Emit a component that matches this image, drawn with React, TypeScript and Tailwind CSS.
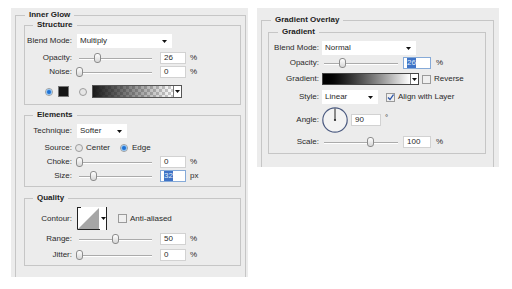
import type { ReactNode } from 'react'

function Group({
  title,
  legendClass,
  className,
  children,
}: {
  title: string
  legendClass: string
  className?: string
  children: ReactNode
}) {
  return (
    <fieldset className={`min-w-0 border border-[#c6c6c6] ${className ?? ''}`}>
      <legend className={`px-[4px] text-[8px] font-bold leading-[10px] text-[#1c1c1c] ${legendClass}`}>
        {title}
      </legend>
      {children}
    </fieldset>
  )
}

function Row({
  label,
  labelClass,
  className,
  children,
}: {
  label: string
  labelClass: string
  className: string
  children: ReactNode
}) {
  return (
    <div className={`flex items-center ${className}`}>
      <span className={`shrink-0 text-right ${labelClass}`}>{label}</span>
      {children}
    </div>
  )
}

function Arrow() {
  return (
    <svg width="5" height="3" viewBox="0 0 5 3">
      <path d="M0 0 H5 L2.5 3 Z" fill="#111" />
    </svg>
  )
}

function Select({ value, className }: { value: string; className: string }) {
  return (
    <div className={`flex h-[14px] items-center justify-between bg-white pl-[3px] pr-[5px] ${className}`}>
      <span>{value}</span>
      <Arrow />
    </div>
  )
}

function Slider({ className, pos }: { className: string; pos: number }) {
  return (
    <div className={`relative h-[12px] shrink-0 ${className}`}>
      <div className="absolute left-[2px] right-0 top-[6px] h-px bg-[#ababab]" />
      <div className="absolute left-[2px] right-0 top-[7px] h-px bg-white" />
      <div
        className="absolute top-[1px] h-[10px] w-[7px] rounded-[3px] border border-[#8c8c8c] bg-linear-to-b from-white to-[#d6d6d6]"
        style={{ left: pos - 3 }}
      />
    </div>
  )
}

function NumBox({
  value,
  className,
  focus,
}: {
  value: string
  className: string
  focus?: boolean
}) {
  return (
    <div
      className={`flex h-[12px] shrink-0 items-center border bg-white pl-[3px] ${
        focus ? 'border-[#86aad8]' : 'border-[#d2d2d2]'
      } ${className}`}
    >
      <span className={focus ? 'bg-[#3f73c6] text-[#dfe9f7]' : ''}>{value}</span>
    </div>
  )
}

function Radio({ on }: { on?: boolean }) {
  return (
    <div className="flex h-[8px] w-[8px] shrink-0 items-center justify-center rounded-full border border-[#9d9d9d] bg-[#e6e6e6]">
      {on && <div className="h-[4px] w-[4px] rounded-full bg-[#1f72d4] ring-1 ring-[#8fc0ee]" />}
    </div>
  )
}

function Check({ on, className }: { on?: boolean; className: string }) {
  return (
    <div className={`h-[9px] w-[9px] shrink-0 border border-[#9a9a9a] bg-[#efefef] ${className}`}>
      {on && (
        <svg width="7" height="7" viewBox="0 0 7 7">
          <path d="M1 3.5 L3 5.5 L6.5 0.5" stroke="#2c55a8" strokeWidth="1.3" fill="none" />
        </svg>
      )}
    </div>
  )
}

export default function App() {
  return (
    <div className="flex h-[289px] w-[512px] items-start bg-white font-['Liberation_Sans',Arial,sans-serif] text-[8px] leading-[10px] text-[#2a2a2a]">
      {/* Inner Glow */}
      <div className="ml-[11px] mt-[8px] h-[269px] w-[237px] shrink-0 overflow-hidden bg-[#ececec] pl-[4px] pr-[2px] pt-[2px]">
        <Group title="Inner Glow" legendClass="ml-[9px]">
          <div className="pb-[30px] pl-[8px] pr-[4px]">
            <Group title="Structure" legendClass="ml-[8px]">
              <div className="pb-[6px]">
                <Row label="Blend Mode:" labelClass="w-[47px]" className="mt-[4px] h-[14px]">
                  <Select value="Multiply" className="ml-[5px] w-[95px]" />
                </Row>
                <Row label="Opacity:" labelClass="w-[47px]" className="mt-[4px] h-[12px]">
                  <Slider className="ml-[5px] w-[75px]" pos={20} />
                  <NumBox value="26" className="ml-[8px] w-[26px]" />
                  <span className="ml-[4px]">%</span>
                </Row>
                <Row label="Noise:" labelClass="w-[47px]" className="mt-[2px] h-[12px]">
                  <Slider className="ml-[5px] w-[75px]" pos={2} />
                  <NumBox value="0" className="ml-[8px] w-[26px]" />
                  <span className="ml-[4px]">%</span>
                </Row>
                <div className="mt-[7px] flex h-[13px] items-center pl-[20px]">
                  <Radio on />
                  <div className="ml-[5px] h-[11px] w-[11px] border border-[#777] bg-[#151515]" />
                  <div className="ml-[10px]">
                    <Radio />
                  </div>
                  <div className="ml-[5px] flex h-[13px] w-[90px] border border-[#555]">
                    <div className="h-full w-[80px] bg-[image:repeating-conic-gradient(#cdcdcd_0%_25%,#ffffff_0%_50%)] bg-[length:6px_6px]">
                      <div className="h-full w-full bg-linear-to-r from-[#1a1a1a] to-transparent" />
                    </div>
                    <div className="flex flex-1 items-center justify-center border-l border-[#777] bg-white">
                      <Arrow />
                    </div>
                  </div>
                </div>
              </div>
            </Group>

            <Group title="Elements" legendClass="ml-[8px]" className="mt-[5px]">
              <div className="pb-[4px]">
                <Row label="Technique:" labelClass="w-[47px]" className="mt-[4px] h-[14px]">
                  <Select value="Softer" className="ml-[5px] w-[50px]" />
                </Row>
                <Row label="Source:" labelClass="w-[47px]" className="mt-[5px] h-[10px]">
                  <div className="ml-[3px]">
                    <Radio />
                  </div>
                  <span className="ml-[3px]">Center</span>
                  <div className="ml-[10px]">
                    <Radio on />
                  </div>
                  <span className="ml-[4px]">Edge</span>
                </Row>
                <Row label="Choke:" labelClass="w-[47px]" className="mt-[3px] h-[12px]">
                  <Slider className="ml-[5px] w-[75px]" pos={2} />
                  <NumBox value="0" className="ml-[8px] w-[26px]" />
                  <span className="ml-[4px]">%</span>
                </Row>
                <Row label="Size:" labelClass="w-[47px]" className="mt-[2px] h-[12px]">
                  <Slider className="ml-[5px] w-[75px]" pos={16} />
                  <NumBox value="32" className="ml-[8px] w-[26px]" focus />
                  <span className="ml-[4px]">px</span>
                </Row>
              </div>
            </Group>

            <Group title="Quality" legendClass="ml-[8px]" className="mt-[6px]">
              <div className="pb-[4px]">
                <Row label="Contour:" labelClass="w-[47px]" className="mt-[4px] h-[23px]">
                  <div className="ml-[5px] flex h-[23px]">
                    <svg width="23" height="23" viewBox="0 0 23 23">
                      <rect x="0" y="0" width="23" height="23" fill="#fff" />
                      <path d="M1 22 L22 1 L22 22 Z" fill="#a6a6a6" />
                      <path d="M0.5 0 V22.5 H23" stroke="#222" fill="none" />
                      <path d="M0 0.5 H4" stroke="#222" />
                    </svg>
                    <div className="flex w-[7px] items-center justify-center border-r border-[#222] bg-white">
                      <Arrow />
                    </div>
                  </div>
                  <Check className="ml-[11px]" />
                  <span className="ml-[3px]">Anti-aliased</span>
                </Row>
                <Row label="Range:" labelClass="w-[47px]" className="mt-[3px] h-[12px]">
                  <Slider className="ml-[5px] w-[75px]" pos={38} />
                  <NumBox value="50" className="ml-[8px] w-[26px]" />
                  <span className="ml-[4px]">%</span>
                </Row>
                <Row label="Jitter:" labelClass="w-[47px]" className="mt-[4px] h-[12px]">
                  <Slider className="ml-[5px] w-[75px]" pos={2} />
                  <NumBox value="0" className="ml-[8px] w-[26px]" />
                  <span className="ml-[4px]">%</span>
                </Row>
              </div>
            </Group>
          </div>
        </Group>
      </div>

      {/* Gradient Overlay */}
      <div className="ml-[9px] mt-[8px] h-[159px] w-[242px] shrink-0 overflow-hidden bg-[#ececec] pl-[4px] pr-[5px] pt-[7px]">
        <Group title="Gradient Overlay" legendClass="ml-[9px]">
          <div className="pb-[30px] pl-[6px] pr-[7px] pt-[2px]">
            <Group title="Gradient" legendClass="ml-[9px]">
              <div className="pb-[5px]">
                <Row label="Blend Mode:" labelClass="w-[50px]" className="mt-[4px] h-[14px]">
                  <Select value="Normal" className="ml-[3px] w-[94px]" />
                </Row>
                <Row label="Opacity:" labelClass="w-[50px]" className="mt-[2px] h-[12px]">
                  <Slider className="ml-[3px] w-[76px]" pos={20} />
                  <NumBox value="26" className="ml-[5px] w-[28px]" focus />
                  <span className="ml-[5px]">%</span>
                </Row>
                <Row label="Gradient:" labelClass="w-[50px]" className="mt-[4px] h-[12px]">
                  <div className="ml-[3px] flex h-[12px] w-[97px] border border-[#444]">
                    <div className="h-full w-[87px] bg-linear-to-r from-black to-white" />
                    <div className="flex flex-1 items-center justify-center border-l border-[#777] bg-white">
                      <Arrow />
                    </div>
                  </div>
                  <Check className="ml-[3px]" />
                  <span className="ml-[3px]">Reverse</span>
                </Row>
                <Row label="Style:" labelClass="w-[50px]" className="mt-[5px] h-[14px]">
                  <Select value="Linear" className="ml-[3px] w-[56px]" />
                  <Check on className="ml-[8px]" />
                  <span className="ml-[3px]">Align with Layer</span>
                </Row>
                <Row label="Angle:" labelClass="w-[50px]" className="mt-[3px] h-[26px]">
                  <svg className="ml-[3px] shrink-0" width="26" height="26" viewBox="0 0 26 26">
                    <circle cx="13" cy="13" r="12.2" fill="#f3f3f3" stroke="#4d5c82" strokeWidth="1.2" />
                    <path d="M13 13 V1.5" stroke="#222" strokeWidth="1" />
                    <circle cx="13" cy="13" r="1.1" fill="#222" />
                  </svg>
                  <NumBox value="90" className="ml-[3px] w-[30px]" />
                  <span className="ml-[4px] self-start pt-[6px]">°</span>
                </Row>
                <Row label="Scale:" labelClass="w-[50px]" className="mt-[3px] h-[12px]">
                  <Slider className="ml-[3px] w-[76px]" pos={48} />
                  <NumBox value="100" className="ml-[5px] w-[28px]" />
                  <span className="ml-[5px]">%</span>
                </Row>
              </div>
            </Group>
          </div>
        </Group>
      </div>
    </div>
  )
}
